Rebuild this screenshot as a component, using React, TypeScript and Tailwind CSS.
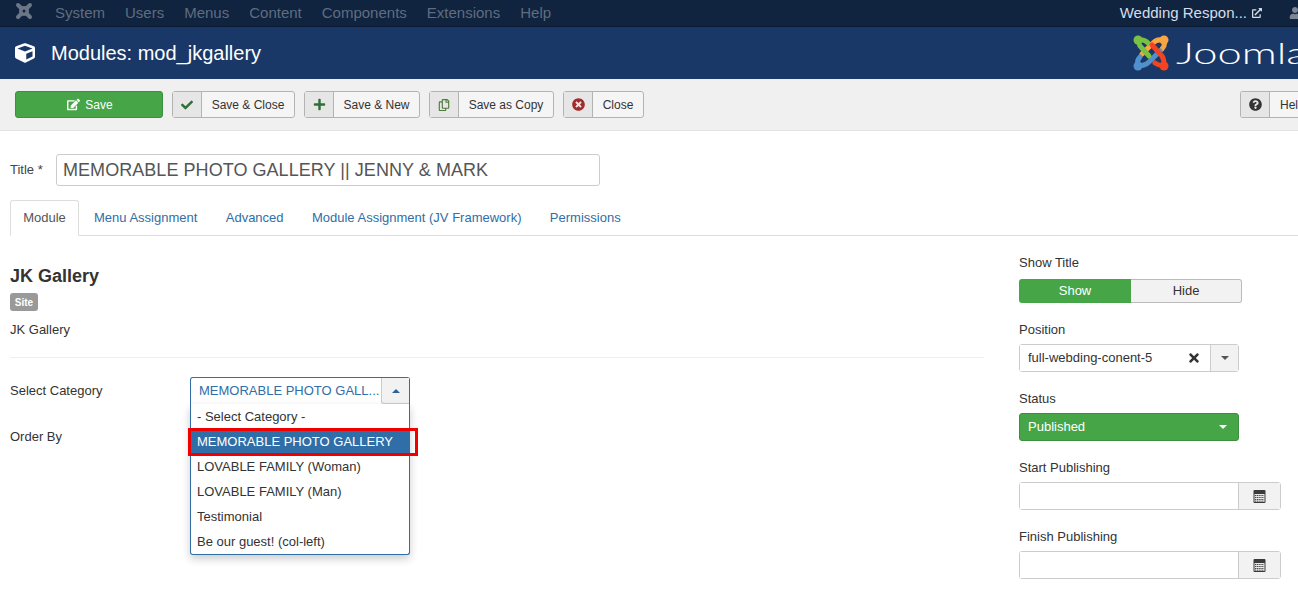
import { FaCheck, FaCube, FaEdit, FaPlus, FaQuestionCircle, FaTimes, FaTimesCircle, FaUser, FaRegCopy, FaExternalLinkAlt } from "react-icons/fa";
import type { ReactNode } from "react";

const navItems = ["System", "Users", "Menus", "Content", "Components", "Extensions", "Help"];
const tabs = ["Menu Assignment", "Advanced", "Module Assignment (JV Framework)", "Permissions"];
const options = ["LOVABLE FAMILY (Woman)", "LOVABLE FAMILY (Man)", "Testimonial", "Be our guest! (col-left)"];

const JoomlaMark = () => (
    <svg width="36" height="36" viewBox="0 0 36 36" fill="none" strokeWidth="5" strokeLinecap="round" className="shrink-0">
        <path d="M9 19 L20 8 C23 5 27 4 31 6 C32 9 31 12 29 14" stroke="#f9a541" />
        <circle cx="31" cy="5" r="4.5" fill="#f9a541" />
        <path d="M27 16 L16 27 C13 30 9 31 5 30 C4 27 5 24 7 22" stroke="#5091cd" />
        <circle cx="5" cy="31" r="4.5" fill="#5091cd" />
        <path d="M16 21 L7 11 C5 8 6 5 9 5 C12 5 13 6 15 8" stroke="#7ac143" />
        <circle cx="5" cy="5" r="4.5" fill="#7ac143" />
        <path d="M19 10 L29 21 C31 24 31 27 31 30 C28 31 25 30 22 28" stroke="#f44321" />
        <circle cx="31" cy="31" r="4.5" fill="#f44321" />
    </svg>
);

const CalendarIcon = () => (
    <svg width="13" height="13" viewBox="0 0 13 13" className="text-[#333]">
        <rect x="0.5" y="0" width="12" height="13" rx="1" fill="#3a3a3a" />
        <rect x="1.5" y="4" width="10" height="8" fill="#e8e8e8" />
        <path d="M2 5.5 H11 M2 7.5 H11 M2 9.5 H11 M2 11.2 H11" stroke="#444" strokeWidth="1" strokeDasharray="1.2 0.6" />
    </svg>
);

const ToolButton = ({ icon, label, textWidth }: { icon: ReactNode; label: string; textWidth: string }) => (
    <div className={`flex h-[27px] items-stretch rounded-[3px] border border-[#b3b3b3] bg-[#f5f5f5] text-xs text-[#333] ${textWidth}`}>
        <div className="flex w-[29px] shrink-0 items-center justify-center border-r border-[#b3b3b3] bg-[#e6e6e6]">{icon}</div>
        <div className="flex flex-1 items-center justify-center whitespace-nowrap">{label}</div>
    </div>
);

const DateField = ({ label }: { label: string }) => (
    <div className="flex flex-col gap-[5px]">
        <div className="h-[19px] leading-[19px]">{label}</div>
        <div className="flex h-[28px] w-[262px] rounded-[3px] border border-[#ccc]">
            <div className="flex-1 bg-white" />
            <div className="flex w-[42px] items-center justify-center border-l border-[#ccc] bg-[#f2f2f2]">
                <CalendarIcon />
            </div>
        </div>
    </div>
);

const App = () => {
    return (
        <div className="relative h-[599px] w-[1298px] overflow-hidden bg-white font-['Liberation_Sans',Arial,sans-serif] text-[13px] text-[#333]">
            <div className="flex h-[27px] items-center justify-between border-b border-[#0a1a33] bg-[#10233f] pl-[15px]">
                <div className="flex items-center">
                    <svg width="18" height="18" viewBox="0 0 18 18" className="mr-[22px] -translate-y-[2px]" fill="none" stroke="#6b7686" strokeLinecap="round">
                        <path d="M3 3 L15 15 M15 3 L3 15" strokeWidth="4" />
                        <circle cx="9" cy="9" r="4" strokeWidth="2" />
                        <circle cx="9" cy="9" r="1.5" fill="#10233f" stroke="none" />
                    </svg>
                    <div className="flex gap-[20px] text-[15px] text-[#5f6d80]">
                        {navItems.map(item => (
                            <span key={item}>{item}</span>
                        ))}
                    </div>
                </div>
                <div className="mr-[-3px] flex items-center text-[15px] text-[#d5dde8]">
                    <span>Wedding Respon...</span>
                    <FaExternalLinkAlt className="ml-[5px] text-[10px]" />
                    <FaUser className="ml-[27px] text-[12px] text-[#7c8796]" />
                </div>
            </div>

            <div className="flex h-[52px] items-center justify-between bg-[#1a3867] pl-[15px]">
                <div className="flex items-center text-white">
                    <FaCube className="text-[20px]" />
                    <span className="ml-[16px] text-[20px]">Modules: mod_jkgallery</span>
                </div>
                <div className="flex w-[165px] items-center overflow-hidden">
                    <JoomlaMark />
                    <span className="ml-[7px] origin-left scale-x-150 font-['Lato',sans-serif] text-[29px] font-light text-white">Joomla</span>
                </div>
            </div>

            <div className="flex h-[52px] items-center justify-between border-b border-[#e3e3e3] bg-[#f0f0f0] pl-[15px]">
                <div className="flex items-center gap-[9px]">
                    <div className="flex h-[27px] w-[148px] items-center justify-center gap-[5px] rounded-[3px] border border-[#3c8f3f] bg-[#46a546] pl-[2px] text-xs text-white">
                        <FaEdit className="text-[13px]" />
                        Save
                    </div>
                    <ToolButton icon={<FaCheck className="text-[12px] text-[#2f6f38]" />} label="Save & Close" textWidth="w-[123px]" />
                    <ToolButton icon={<FaPlus className="text-[13px] text-[#2f6f38]" />} label="Save & New" textWidth="w-[116px]" />
                    <ToolButton icon={<FaRegCopy className="text-[12px] text-[#4d7a3c]" />} label="Save as Copy" textWidth="w-[125px]" />
                    <ToolButton icon={<FaTimesCircle className="text-[13px] text-[#a02c2c]" />} label="Close" textWidth="w-[81px]" />
                </div>
                <div className="flex h-[27px] w-[58px] items-stretch rounded-l-[3px] border border-r-0 border-[#b3b3b3] bg-[#f5f5f5] text-xs">
                    <div className="flex w-[29px] shrink-0 items-center justify-center border-r border-[#b3b3b3] bg-[#e6e6e6]">
                        <FaQuestionCircle className="text-[13px] text-[#333]" />
                    </div>
                    <div className="flex items-center overflow-hidden whitespace-nowrap pl-[10px]">Help</div>
                </div>
            </div>

            <div className="pl-[10px] pt-[23px]">
                <div className="flex items-center">
                    <label className="w-[46px] text-[#444]">Title *</label>
                    <div className="flex h-[32px] w-[544px] items-center rounded-[3px] border border-[#ccc] px-[6px] text-[18px] tracking-[0.05px] text-[#555]">
                        MEMORABLE PHOTO GALLERY || JENNY &amp; MARK
                    </div>
                </div>

                <div className="mt-[14px] flex h-[36px] border-b border-[#ddd]">
                    <div className="flex h-[36px] w-[69px] items-center justify-center rounded-t-[3px] border border-b-white border-[#ddd] text-[#555]">Module</div>
                    <div className="ml-[15px] flex h-[35px] items-center gap-[28.4px] text-[#2f6ea7]">
                        {tabs.map(tab => (
                            <span key={tab}>{tab}</span>
                        ))}
                    </div>
                </div>

                <div className="flex">
                    <div className="w-[974px]">
                        <h2 className="mt-[29px] h-[22px] text-[18px] font-bold leading-[22px]">JK Gallery</h2>
                        <div className="mt-[6px] flex h-[18px] w-[28px] items-center justify-center rounded-[3px] bg-[#999] text-[10px] font-bold text-white">Site</div>
                        <p className="mt-[10px] h-[18px] leading-[18px]">JK Gallery</p>
                        <hr className="mt-[18px] border-[#eee]" />
                        <div className="mt-[19px] flex">
                            <div className="w-[180px]">
                                <div className="flex h-[27px] items-center">Select Category</div>
                                <div className="mt-[19px] flex h-[27px] items-center">Order By</div>
                            </div>
                            <div className="relative h-[27px] w-[220px]">
                                <div className="flex h-[27px] items-start justify-between rounded-t-[3px] border border-b-0 border-[#2f6ea7] pl-[8px]">
                                    <span className="truncate leading-[25px] text-[#2f6ea7]">MEMORABLE PHOTO GALL...</span>
                                    <div className="flex h-[26px] w-[28px] shrink-0 items-center justify-center rounded-bl-[3px] border-b border-l border-[#ccc] bg-[#f2f2f2]">
                                        <span className="h-0 w-0 border-x-[4px] border-b-[4px] border-x-transparent border-b-[#2a6496]" />
                                    </div>
                                </div>
                                <div className="absolute left-0 top-[27px] w-[220px] rounded-b-[3px] border border-t-0 border-[#2f6ea7] bg-white shadow-[0_4px_8px_rgba(0,0,0,0.2)]">
                                    <div className="flex h-[25px] items-center pl-[6px]">- Select Category -</div>
                                    <div className="flex h-[25px] items-center bg-[#2f6ea7] pl-[6px] text-white">MEMORABLE PHOTO GALLERY</div>
                                    {options.map(option => (
                                        <div key={option} className="flex h-[25px] items-center pl-[6px]">{option}</div>
                                    ))}
                                </div>
                                <div className="absolute left-[-2px] top-[51px] h-[28px] w-[230px] border-[3px] border-[#ee0000]" />
                            </div>
                        </div>
                    </div>

                    <div className="ml-[35px] flex flex-col pt-[17px]">
                        <div className="h-[19px] leading-[19px]">Show Title</div>
                        <div className="mt-[7px] flex h-[24px] w-[223px]">
                            <div className="flex w-[112px] items-center justify-center rounded-l-[3px] bg-[#46a546] text-white">Show</div>
                            <div className="flex flex-1 items-center justify-center rounded-r-[3px] border border-l-0 border-[#bbb] bg-[#f2f2f2]">Hide</div>
                        </div>
                        <div className="mt-[17px] h-[19px] leading-[19px]">Position</div>
                        <div className="mt-[5px] flex h-[28px] w-[220px] rounded-[3px] border border-[#ccc]">
                            <div className="flex flex-1 items-center justify-between bg-white pl-[8px] pr-[9px]">
                                <span>full-webding-conent-5</span>
                                <FaTimes className="text-[14px] text-[#333]" />
                            </div>
                            <div className="flex w-[28px] items-center justify-center border-l border-[#ccc] bg-[#f2f2f2]">
                                <span className="h-0 w-0 border-x-[4px] border-t-[4px] border-x-transparent border-t-[#555]" />
                            </div>
                        </div>
                        <div className="mt-[17px] h-[19px] leading-[19px]">Status</div>
                        <div className="mt-[5px] flex h-[28px] w-[220px] items-center justify-between rounded-[3px] border border-[#3c8f3f] bg-[#46a546] pl-[8px] pr-[11px] text-white">
                            <span>Published</span>
                            <span className="h-0 w-0 border-x-[4px] border-t-[4px] border-x-transparent border-t-white" />
                        </div>
                        <div className="mt-[17px] flex flex-col gap-[17px]">
                            <DateField label="Start Publishing" />
                            <DateField label="Finish Publishing" />
                        </div>
                    </div>
                </div>
            </div>
        </div>
    );
};

export default App;
